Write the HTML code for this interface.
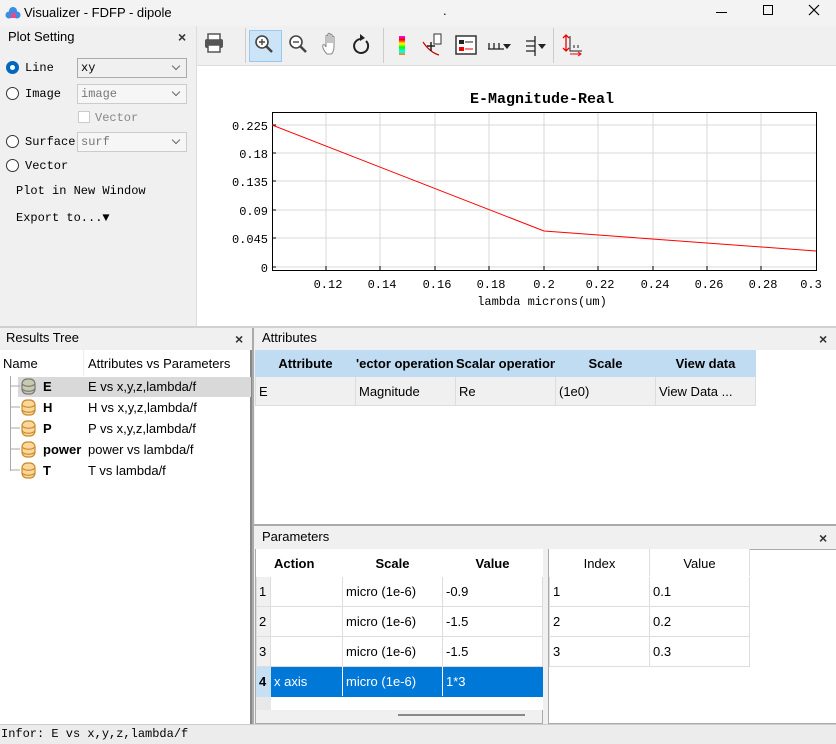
<!DOCTYPE html>
<html><head><meta charset="utf-8"><style>
*{box-sizing:border-box;margin:0;padding:0}
body{width:836px;height:744px;overflow:hidden;background:#f0f0f0;font-family:"Liberation Sans","Noto Sans CJK SC",sans-serif;font-size:13px;color:#000;position:relative}
.a{position:absolute}
.m{font-family:"Liberation Mono","Noto Sans CJK SC",monospace;font-size:12px}
.x{font-size:14px;font-weight:bold;color:#333}
table{border-collapse:collapse;position:absolute;font-size:13px;table-layout:fixed}
td{border:1px solid #ddd;padding:0 3px;white-space:nowrap;overflow:hidden}
.radio{position:absolute;width:13px;height:13px;border:1px solid #333;border-radius:50%;background:#fff}
.combo{position:absolute;height:20px;border:1px solid #bbb;background:#f6f6f6;padding:2px 3px}
.combo:after{content:"";position:absolute;right:7px;top:4px;width:5px;height:5px;border-right:1px solid #666;border-bottom:1px solid #666;transform:rotate(45deg)}
</style></head><body>
<div class="a" style="left:0;top:0;width:836px;height:26px;background:#f3f3f3"></div>
<svg class="a" style="left:5px;top:5px" width="16" height="16"><circle cx="8" cy="6" r="4" fill="#3a8ee6"/><circle cx="4" cy="10" r="3.5" fill="#3a8ee6"/><circle cx="12" cy="10" r="3.5" fill="#3a8ee6"/><rect x="6" y="8" width="5" height="5" fill="#e84b8a"/></svg>
<div class="a" style="left:24px;top:5px;font-size:13px">Visualizer - FDFP - dipole</div>
<div class="a" style="left:443px;top:3px">.</div>
<div class="a" style="left:716px;top:12px;width:11px;height:1px;background:#000"></div>
<div class="a" style="left:763px;top:5px;width:10px;height:10px;border:1px solid #000"></div>
<svg class="a" style="left:808px;top:4px" width="12" height="12"><path d="M1 1L11 11M11 1L1 11" stroke="#000" stroke-width="1.2"/></svg>

<div class="a" style="left:8px;top:29px;font-size:13px">Plot Setting</div>
<div class="a x" style="left:178px;top:29px">×</div>
<div class="radio" style="left:6px;top:61px;border:4px solid #0067c0"></div>
<div class="a m" style="left:25px;top:61px">Line</div>
<div class="combo m" style="left:77px;top:58px;width:110px;background:#f0f0f0;border-color:#aaa">xy</div>
<div class="radio" style="left:6px;top:87px"></div>
<div class="a m" style="left:25px;top:87px">Image</div>
<div class="combo m" style="left:77px;top:84px;width:110px;color:#777;border-color:#ccc">image</div>
<div class="a" style="left:78px;top:111px;width:12px;height:12px;border:1px solid #ccc;background:#fff"></div>
<div class="a m" style="left:95px;top:111px;color:#888">Vector</div>
<div class="radio" style="left:6px;top:135px"></div>
<div class="a m" style="left:25px;top:135px">Surface</div>
<div class="combo m" style="left:77px;top:132px;width:110px;color:#777;border-color:#ccc">surf</div>
<div class="radio" style="left:6px;top:159px"></div>
<div class="a m" style="left:25px;top:159px">Vector</div>
<div class="a m" style="left:16px;top:184px">Plot in New Window</div>
<div class="a m" style="left:16px;top:211px">Export to...▼</div>
<div class="a" style="left:196px;top:26px;width:1px;height:300px;background:#ddd"></div>

<div class="a" style="left:197px;top:26px;width:639px;height:39px;background:#f0f0f0"></div>
<div class="a" style="left:245px;top:28px;width:1px;height:35px;background:#ccc"></div>
<div class="a" style="left:383px;top:28px;width:1px;height:35px;background:#ccc"></div>
<div class="a" style="left:553px;top:28px;width:1px;height:35px;background:#ccc"></div>
<div class="a" style="left:249px;top:30px;width:33px;height:32px;background:#cce4f7;border:1px solid #99c9ef"></div>
<svg class="a" style="left:197px;top:26px" width="400" height="40">
<rect x="8" y="13" width="18" height="9" rx="2" fill="#555"/><rect x="11" y="8" width="12" height="6" fill="#fff" stroke="#555" stroke-width="1.5"/><rect x="11" y="19" width="12" height="7" fill="#fff" stroke="#555" stroke-width="1.5"/>
<circle cx="65" cy="16" r="6" fill="#fff" stroke="#444" stroke-width="1.6"/><path d="M62 16h6M65 13v6" stroke="#444" stroke-width="1.4"/><path d="M69 20l6 6" stroke="#444" stroke-width="2.5"/>
<circle cx="99" cy="16" r="6" fill="#fff" stroke="#444" stroke-width="1.6"/><path d="M96 16h6" stroke="#444" stroke-width="1.4"/><path d="M103 20l6 6" stroke="#444" stroke-width="2.5"/>
<path d="M130 28c-3-3-5-7-4-9 1-1 2 0 3 2V10c0-1 2-1 2 0v7V8c0-1 2-1 2 0v9V9c0-1 2-1 2 0v8V11c0-1 2-1 2 0v10c0 4-2 7-3 7z" fill="#fff" stroke="#888" stroke-width="1"/>
<path d="M164 13a7 7 0 1 0 5 2" fill="none" stroke="#222" stroke-width="2"/><path d="M163 8l5 4-5 3z" fill="#222"/>
<defs><linearGradient id="g" x1="0" y1="0" x2="0" y2="1"><stop offset="0" stop-color="#f0f"/><stop offset=".2" stop-color="#f00"/><stop offset=".4" stop-color="#ff0"/><stop offset=".6" stop-color="#0f0"/><stop offset=".8" stop-color="#0ff"/><stop offset="1" stop-color="#f80"/></linearGradient></defs>
<rect x="202" y="10" width="6" height="19" fill="url(#g)"/>
<path d="M226 16c4 6 9 11 16 13" fill="none" stroke="#c00" stroke-width="1.2"/><path d="M230 20h8M234 16v9" stroke="#222" stroke-width="1.5"/><rect x="237" y="8" width="7" height="10" fill="#fff" stroke="#333"/>
<rect x="259" y="10" width="20" height="18" fill="#fff" stroke="#333" stroke-width="1.5"/><rect x="262" y="14" width="5" height="4" fill="#222"/><path d="M268 16h8" stroke="#222"/><rect x="262" y="21" width="5" height="4" fill="#e00"/><path d="M268 23h8" stroke="#e00"/>
<path d="M291 23h16M292 17v6M297 17v6M302 17v6" stroke="#222" stroke-width="1.3"/><path d="M306 18h8l-4 5z" fill="#222"/>
<path d="M338 10v20M329 15h9M329 20h9M329 25h9" stroke="#222" stroke-width="1.3"/><path d="M341 18h8l-4 5z" fill="#222"/>
<path d="M369 9v16M366 12l3-3 3 3M366 22l3 3 3-3" stroke="#e00" stroke-width="1.3" fill="none"/><path d="M373 10v15h12M377 22v-3M381 22v-3" stroke="#222" fill="none"/><path d="M373 28h11M381 26l3 2-3 2" stroke="#e00" fill="none"/>
</svg>

<div class="a" style="left:197px;top:65px;width:639px;height:261px;background:#fff;border-top:1px solid #ddd"></div>
<svg class="a m" style="left:197px;top:65px" width="639" height="261" font-family="Liberation Mono, monospace" font-size="13">
<text x="345" y="38" text-anchor="middle" font-size="15" font-weight="bold">E-Magnitude-Real</text>
<g stroke="#d8d8d8" stroke-width="1">
<path d="M129 47v158M183 47v158M238 47v158M292 47v158M347 47v158M401 47v158M456 47v158M510 47v158M564 47v158"/>
<path d="M75 60h544M75 88h544M75 116h544M75 145h544M75 173h544M75 202h544"/>
</g>
<rect x="75.5" y="47.5" width="544" height="158" fill="none" stroke="#000"/>
<g stroke="#000"><path d="M129 205v-4M183 205v-4M238 205v-4M292 205v-4M347 205v-4M401 205v-4M456 205v-4M510 205v-4M564 205v-4M75 60h4M75 88h4M75 116h4M75 145h4M75 173h4M75 202h4"/></g>
<polyline points="75,60 347,166 619,186" fill="none" stroke="#f00" stroke-width="1"/>
<g text-anchor="end"><text x="71" y="65">0.225</text><text x="71" y="93">0.18</text><text x="71" y="121">0.135</text><text x="71" y="150">0.09</text><text x="71" y="178">0.045</text><text x="71" y="207">0</text></g>
<g text-anchor="middle"><text x="131" y="223">0.12</text><text x="185" y="223">0.14</text><text x="240" y="223">0.16</text><text x="294" y="223">0.18</text><text x="347" y="223">0.2</text><text x="403" y="223">0.22</text><text x="458" y="223">0.24</text><text x="512" y="223">0.26</text><text x="566" y="223">0.28</text><text x="614" y="223">0.3</text>
<text x="345" y="240">lambda microns(um)</text></g>
</svg>
<div class="a" style="left:0;top:326px;width:836px;height:2px;background:#d0d0d0"></div>

<div class="a" style="left:6px;top:330px">Results Tree</div>
<div class="a x" style="left:235px;top:331px">×</div>
<div class="a" style="left:0;top:350px;width:252px;height:374px;background:#fff;border-right:2px solid #888"></div>
<div class="a" style="left:83px;top:350px;width:1px;height:26px;background:#eee"></div>
<div class="a" style="left:3px;top:356px">Name</div>
<div class="a" style="left:88px;top:356px">Attributes vs Parameters</div>
<div class="a" style="left:18px;top:377px;width:233px;height:20px;background:#d9d9d9"></div>
<div class="a" style="left:10px;top:376px;width:1px;height:95px;background:#aaa"></div>
<svg class="a" style="left:10px;top:377px" width="30" height="105">
<g stroke="#aaa"><path d="M0 9h10M0 30h10M0 51h10M0 72h10M0 93h10"/></g>
<g stroke-width="1.2"><g fill="#c9c9b0" stroke="#777"><rect x="12" y="2" width="13" height="15" rx="5"/><path d="M12 7c3 3 10 3 13 0M12 12c3 3 10 3 13 0" fill="none"/></g>
<g fill="#fbd79b" stroke="#c88a2a"><rect x="12" y="23" width="13" height="15" rx="5"/><path d="M12 28c3 3 10 3 13 0M12 33c3 3 10 3 13 0" fill="none"/>
<rect x="12" y="44" width="13" height="15" rx="5"/><path d="M12 49c3 3 10 3 13 0M12 54c3 3 10 3 13 0" fill="none"/>
<rect x="12" y="65" width="13" height="15" rx="5"/><path d="M12 70c3 3 10 3 13 0M12 75c3 3 10 3 13 0" fill="none"/>
<rect x="12" y="86" width="13" height="15" rx="5"/><path d="M12 91c3 3 10 3 13 0M12 96c3 3 10 3 13 0" fill="none"/></g></g>
</svg>
<div class="a" style="left:43px;top:379px;font-weight:bold">E</div><div class="a" style="left:88px;top:379px">E vs x,y,z,lambda/f</div>
<div class="a" style="left:43px;top:400px;font-weight:bold">H</div><div class="a" style="left:88px;top:400px">H vs x,y,z,lambda/f</div>
<div class="a" style="left:43px;top:421px;font-weight:bold">P</div><div class="a" style="left:88px;top:421px">P vs x,y,z,lambda/f</div>
<div class="a" style="left:43px;top:442px;font-weight:bold">power</div><div class="a" style="left:88px;top:442px">power vs lambda/f</div>
<div class="a" style="left:43px;top:463px;font-weight:bold">T</div><div class="a" style="left:88px;top:463px">T vs lambda/f</div>

<div class="a" style="left:252px;top:328px;width:2px;height:396px;background:#aaa"></div>
<div class="a" style="left:262px;top:330px">Attributes</div>
<div class="a x" style="left:819px;top:331px">×</div>
<div class="a" style="left:255px;top:350px;width:581px;height:174px;background:#fff"></div>
<table style="left:255px;top:350px;width:500px">
<colgroup><col style="width:100px"><col style="width:100px"><col style="width:100px"><col style="width:100px"><col style="width:100px"></colgroup>
<tr style="background:#bfdcf2;font-weight:bold;height:26px"><td style="text-align:center;border-color:#bfdcf2">Attribute</td><td style="border-color:#bfdcf2;padding:0">'ector operation</td><td style="border-color:#bfdcf2;padding:0">Scalar operation</td><td style="text-align:center;border-color:#bfdcf2">Scale</td><td style="text-align:center;border-color:#bfdcf2">View data</td></tr>
<tr style="background:#f0f0f0;height:29px"><td>E</td><td>Magnitude</td><td>Re</td><td>(1e0)</td><td>View Data ...</td></tr>
</table>
<div class="a" style="left:254px;top:524px;width:582px;height:2px;background:#aaa"></div>

<div class="a" style="left:262px;top:529px">Parameters</div>
<div class="a x" style="left:819px;top:530px">×</div>
<div class="a" style="left:255px;top:549px;width:288px;height:175px;background:#f0f0f0;border:1px solid #aaa"></div>
<table style="left:256px;top:549px;width:286px">
<colgroup><col style="width:14px"><col style="width:72px"><col style="width:100px"><col style="width:100px"></colgroup>
<tr style="height:27px;font-weight:bold;background:#fff"><td style="border-color:#fff"></td><td style="border-color:#fff">Action</td><td style="text-align:center;border-color:#fff">Scale</td><td style="text-align:center;border-color:#fff">Value</td></tr>
<tr style="height:30px;background:#fff"><td style="background:#f0f0f0;padding:0 2px">1</td><td></td><td>micro (1e-6)</td><td>-0.9</td></tr>
<tr style="height:30px;background:#fff"><td style="background:#f0f0f0;padding:0 2px">2</td><td></td><td>micro (1e-6)</td><td>-1.5</td></tr>
<tr style="height:30px;background:#fff"><td style="background:#f0f0f0;padding:0 2px">3</td><td></td><td>micro (1e-6)</td><td>-1.5</td></tr>
<tr style="height:30px;background:#0078d7;color:#fff"><td style="background:#c6dff3;color:#000;font-weight:bold;padding:0 2px;border-color:#c6dff3">4</td><td style="border-color:#0078d7 #fff #0078d7 #0078d7">x axis</td><td style="border-color:#0078d7 #fff #0078d7 #fff">micro (1e-6)</td><td style="border-color:#0078d7">1*3</td></tr>
<tr style="height:13px"><td style="background:#e8e8e8;border-color:#e8e8e8"></td><td colspan="3" style="background:#fff;border-color:#fff"></td></tr>
</table>
<div class="a" style="left:398px;top:714px;width:127px;height:2px;background:#888"></div>
<div class="a" style="left:548px;top:549px;width:288px;height:175px;background:#fff;border:1px solid #aaa;border-right:none"></div>
<table style="left:549px;top:549px;width:200px">
<colgroup><col style="width:100px"><col style="width:100px"></colgroup>
<tr style="height:27px"><td style="text-align:center;border-color:#fff #ddd #fff #fff">Index</td><td style="text-align:center;border-color:#fff #ddd #fff #ddd">Value</td></tr>
<tr style="height:30px"><td>1</td><td>0.1</td></tr>
<tr style="height:30px"><td>2</td><td>0.2</td></tr>
<tr style="height:30px"><td>3</td><td>0.3</td></tr>
</table>

<div class="a" style="left:0;top:724px;width:836px;height:20px;background:#ececec;border-top:1px solid #ccc"></div>
<div class="a m" style="left:1px;top:727px">Infor: E vs x,y,z,lambda/f</div>
</body></html>
